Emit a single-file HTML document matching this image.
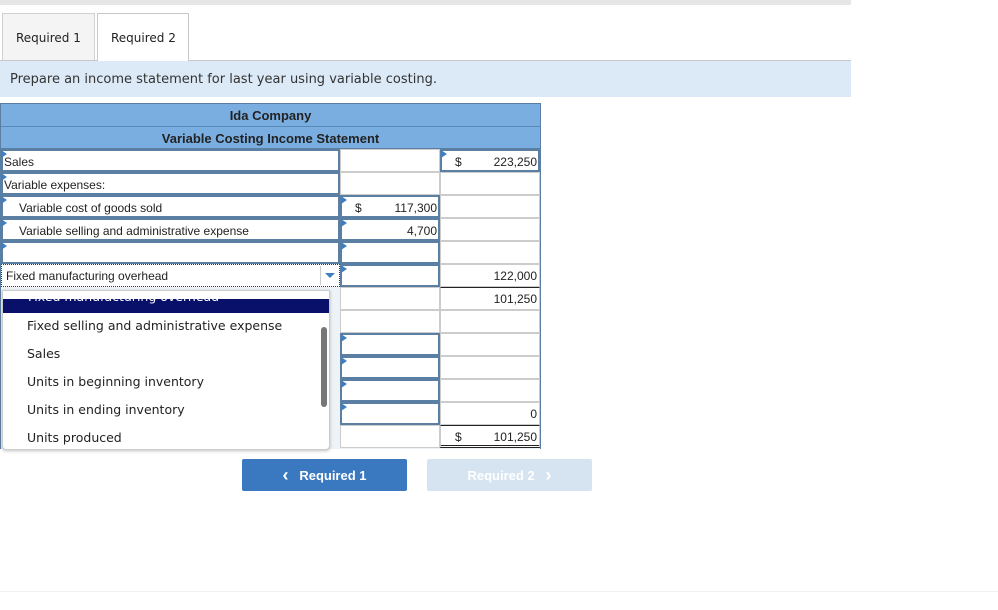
<!DOCTYPE html>
<html><head><style>
*{margin:0;padding:0;box-sizing:border-box}
body{width:998px;height:610px;background:#fff;position:relative;overflow:hidden;font-family:"Liberation Sans",Arial,sans-serif;font-size:12px;color:#222}
.a{position:absolute}
.cell{position:absolute;background:#fff;border:1px solid #5a7fa3;}
.t{position:absolute;font-size:12px;color:#222;white-space:nowrap}
.num{text-align:right}
.tri{position:absolute;width:0;height:0;border-top:4px solid transparent;border-bottom:4px solid transparent;border-left:6px solid #3f7ec0}
.dd{font-family:"DejaVu Sans","Liberation Sans",sans-serif;font-size:12.5px;color:#222;position:absolute;left:27px}
</style></head><body>
<div class="a" style="left:0;top:0;width:851px;height:5px;background:#e6e6e6"></div>
<div class="a" style="left:0;top:60px;width:851px;height:1px;background:#c8c8c8"></div>
<div class="a" style="left:2px;top:13px;width:93px;height:47px;background:#f4f4f4;border:1px solid #d0d0d0;border-bottom:none"></div>
<div class="t" style="left:16px;top:31px;font-family:'DejaVu Sans',sans-serif;font-size:12px">Required 1</div>
<div class="a" style="left:97px;top:13px;width:92px;height:48px;background:#fff;border:1px solid #c8c8c8;border-bottom:none"></div>
<div class="t" style="left:111px;top:31px;font-family:'DejaVu Sans',sans-serif;font-size:12px">Required 2</div>
<div class="a" style="left:0;top:61px;width:851px;height:36px;background:#dce9f6"></div>
<div class="t" style="left:10px;top:72px;font-family:'DejaVu Sans',sans-serif;font-size:13px;color:#333">Prepare an income statement for last year using variable costing.</div>

<div class="a" style="left:0;top:103px;width:541px;height:46px;background:#7aaee0;border:1px solid #5a7fa3"></div>
<div class="a" style="left:1px;top:126px;width:539px;height:1px;background:#5a88b8"></div>
<div class="t" style="left:0;width:541px;text-align:center;top:108px;font-weight:bold;font-size:13px;color:#222">Ida Company</div>
<div class="t" style="left:0;width:541px;text-align:center;top:131px;font-weight:bold;font-size:13px;color:#222">Variable Costing Income Statement</div>
<div class="a" style="left:0;top:149px;width:541px;height:300px;background:#eef3f8;border-left:1px solid #5a7fa3;border-right:1px solid #5a7fa3"></div>

<div class="cell" style="left:1px;top:149px;width:339px;height:23px;border-width:2px"></div>
<div class="cell" style="left:340px;top:149px;width:100px;height:23px;border-color:#ccc"></div>
<div class="cell" style="left:440px;top:149px;width:100px;height:23px;border-width:2px"></div>
<div class="cell" style="left:1px;top:172px;width:339px;height:23px;border-width:2px"></div>
<div class="cell" style="left:340px;top:172px;width:100px;height:23px;border-color:#ccc"></div>
<div class="cell" style="left:440px;top:172px;width:100px;height:23px;border-color:#ccc"></div>
<div class="cell" style="left:1px;top:195px;width:339px;height:23px;border-width:2px"></div>
<div class="cell" style="left:340px;top:195px;width:100px;height:23px;border-width:2px"></div>
<div class="cell" style="left:440px;top:195px;width:100px;height:23px;border-color:#ccc"></div>
<div class="cell" style="left:1px;top:218px;width:339px;height:23px;border-width:2px"></div>
<div class="cell" style="left:340px;top:218px;width:100px;height:23px;border-width:2px"></div>
<div class="cell" style="left:440px;top:218px;width:100px;height:23px;border-color:#ccc"></div>
<div class="cell" style="left:1px;top:241px;width:339px;height:23px;border-width:2px"></div>
<div class="cell" style="left:340px;top:241px;width:100px;height:23px;border-width:2px"></div>
<div class="cell" style="left:440px;top:241px;width:100px;height:23px;border-color:#ccc"></div>
<div class="cell" style="left:1px;top:264px;width:339px;height:23px;border:1px dotted #335"></div>
<div class="a" style="left:320px;top:266px;width:19px;height:19px;border-left:1px solid #ccc"></div>
<div class="a" style="left:325px;top:273px;width:0;height:0;border-left:5px solid transparent;border-right:5px solid transparent;border-top:5px solid #3f7ec0"></div>
<div class="cell" style="left:340px;top:264px;width:100px;height:23px;border-width:2px"></div>
<div class="cell" style="left:440px;top:264px;width:100px;height:23px;border-color:#ccc"></div>
<div class="cell" style="left:340px;top:287px;width:100px;height:23px;border-color:#ccc"></div>
<div class="cell" style="left:440px;top:287px;width:100px;height:23px;border-color:#ccc;border-top:1px solid #222"></div>
<div class="cell" style="left:340px;top:310px;width:100px;height:23px;border-color:#ccc"></div>
<div class="cell" style="left:440px;top:310px;width:100px;height:23px;border-color:#ccc"></div>
<div class="cell" style="left:340px;top:333px;width:100px;height:23px;border-width:2px"></div>
<div class="cell" style="left:440px;top:333px;width:100px;height:23px;border-color:#ccc"></div>
<div class="cell" style="left:340px;top:356px;width:100px;height:23px;border-width:2px"></div>
<div class="cell" style="left:440px;top:356px;width:100px;height:23px;border-color:#ccc"></div>
<div class="cell" style="left:340px;top:379px;width:100px;height:23px;border-width:2px"></div>
<div class="cell" style="left:440px;top:379px;width:100px;height:23px;border-color:#ccc"></div>
<div class="cell" style="left:340px;top:402px;width:100px;height:23px;border-width:2px"></div>
<div class="cell" style="left:440px;top:402px;width:100px;height:23px;border-color:#ccc"></div>
<div class="cell" style="left:340px;top:425px;width:100px;height:23px;border-color:#ccc"></div>
<div class="cell" style="left:440px;top:425px;width:100px;height:23px;border-color:#ccc;border-top:1px solid #222;border-bottom:3px double #222"></div>

<div class="tri" style="left:1px;top:150px"></div>
<div class="tri" style="left:441px;top:150px"></div>
<div class="tri" style="left:1px;top:173px"></div>
<div class="tri" style="left:1px;top:196px"></div><div class="tri" style="left:341px;top:196px"></div>
<div class="tri" style="left:1px;top:219px"></div><div class="tri" style="left:341px;top:219px"></div>
<div class="tri" style="left:1px;top:242px"></div><div class="tri" style="left:341px;top:242px"></div>
<div class="tri" style="left:341px;top:265px"></div>
<div class="tri" style="left:341px;top:334px"></div><div class="tri" style="left:341px;top:357px"></div>
<div class="tri" style="left:341px;top:380px"></div><div class="tri" style="left:341px;top:403px"></div>

<div class="t" style="left:4px;top:155px">Sales</div>
<div class="t" style="left:455px;top:155px">$</div>
<div class="t num" style="left:440px;width:97px;top:155px">223,250</div>
<div class="t" style="left:4px;top:178px">Variable expenses:</div>
<div class="t" style="left:19px;top:201px">Variable cost of goods sold</div>
<div class="t" style="left:355px;top:201px">$</div>
<div class="t num" style="left:340px;width:97px;top:201px">117,300</div>
<div class="t" style="left:19px;top:224px">Variable selling and administrative expense</div>
<div class="t num" style="left:340px;width:97px;top:224px">4,700</div>
<div class="t" style="left:6px;top:269px">Fixed manufacturing overhead</div>
<div class="t num" style="left:440px;width:97px;top:269px">122,000</div>
<div class="t num" style="left:440px;width:97px;top:292px">101,250</div>
<div class="t num" style="left:440px;width:97px;top:407px">0</div>
<div class="t" style="left:455px;top:430px">$</div>
<div class="t num" style="left:440px;width:97px;top:430px">101,250</div>

<div class="a" style="left:2px;top:290px;width:328px;height:160px;background:#fff;border:1px solid #ccc;border-radius:0 0 4px 4px;box-shadow:0 1px 3px rgba(0,0,0,.25);overflow:hidden">
 <div class="a" style="left:0;top:8px;width:328px;height:14px;background:#08106a;overflow:hidden"><div class="dd" style="left:25px;top:-10px;color:#fff">Fixed manufacturing overhead</div></div>
 <div class="dd" style="left:24px;top:27px">Fixed selling and administrative expense</div>
 <div class="dd" style="left:24px;top:55px">Sales</div>
 <div class="dd" style="left:24px;top:83px">Units in beginning inventory</div>
 <div class="dd" style="left:24px;top:111px">Units in ending inventory</div>
 <div class="dd" style="left:24px;top:139px">Units produced</div>
 <div class="a" style="left:318px;top:36px;width:6px;height:80px;background:#777;border-radius:3px"></div>
</div>

<div class="a" style="left:242px;top:459px;width:165px;height:32px;background:#3a78c0;border-radius:2px;color:#fff;font-weight:bold;font-size:13px;text-align:center;line-height:32px"><span style="font-size:18px;vertical-align:-1px">&#x2039;</span>&nbsp;&nbsp; Required 1</div>
<div class="a" style="left:427px;top:459px;width:165px;height:32px;background:#d6e3f1;border-radius:2px;color:#fff;font-weight:bold;font-size:13px;text-align:center;line-height:32px">Required 2 &nbsp;&nbsp;<span style="font-size:18px;vertical-align:-1px">&#x203A;</span></div>
<div class="a" style="left:0;top:591px;width:998px;height:1px;background:#f0f0f0"></div>
</body></html>
